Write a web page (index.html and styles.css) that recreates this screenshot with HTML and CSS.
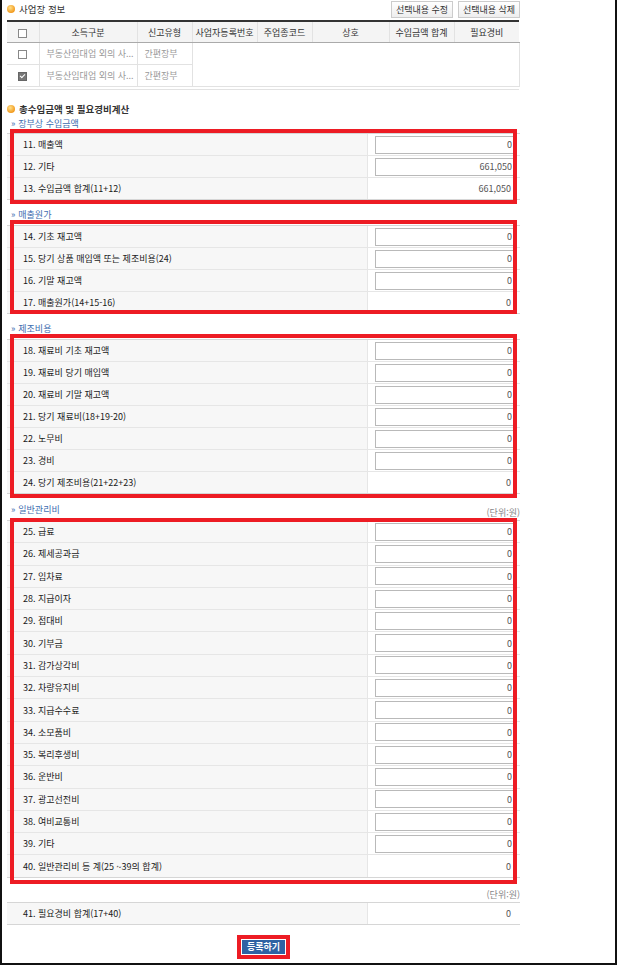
FILE: index.html
```html
<!DOCTYPE html>
<html lang="ko">
<head>
    <meta charset="UTF-8">
    <title>총수입금액 및 필요경비계산</title>
    <link rel="stylesheet" href="styles.css">
</head>
<body>
<div class="page">

    <div class="top-bar">
        <h3 class="sec-title"><span class="dot"></span>사업장 정보</h3>
        <div class="top-btns">
            <button class="btn">선택내용 수정</button>
            <button class="btn">선택내용 삭제</button>
        </div>
    </div>

    <table class="biz-table">
        <colgroup>
            <col style="width:32px"><col style="width:98px"><col style="width:55px"><col style="width:65px">
            <col style="width:55px"><col style="width:77px"><col style="width:65px"><col style="width:65px">
        </colgroup>
        <thead>
            <tr>
                <th><span class="chk"></span></th>
                <th>소득구분</th>
                <th>신고유형</th>
                <th>사업자등록번호</th>
                <th>주업종코드</th>
                <th>상호</th>
                <th>수입금액 합계</th>
                <th>필요경비</th>
            </tr>
        </thead>
        <tbody>
            <tr class="first">
                <td class="c"><span class="chk"></span></td>
                <td class="txt">부동산임대업 외의 사...</td>
                <td class="txt">간편장부</td>
                <td class="blank" colspan="5" rowspan="2"></td>
            </tr>
            <tr>
                <td class="c"><span class="chk on"></span></td>
                <td class="txt">부동산임대업 외의 사...</td>
                <td class="txt">간편장부</td>
            </tr>
        </tbody>
    </table>
    <div class="biz-foot"></div>

    <h3 class="sec-title calc-title"><span class="dot"></span>총수입금액 및 필요경비계산</h3>

    <div class="sub-title">장부상 수입금액</div>
    <div class="box box-1">
        <div class="row"><div class="label">11. 매출액</div><div class="val"><input type="text" value="0"></div></div>
        <div class="row"><div class="label">12. 기타</div><div class="val"><input type="text" value="661,050"></div></div>
        <div class="row"><div class="label">13. 수입금액 합계(11+12)</div><div class="val sum">661,050</div></div>
    </div>

    <div class="sub-title">매출원가</div>
    <div class="box box-2">
        <div class="row"><div class="label">14. 기초 재고액</div><div class="val"><input type="text" value="0"></div></div>
        <div class="row"><div class="label">15. 당기 상품 매입액 또는 제조비용(24)</div><div class="val"><input type="text" value="0"></div></div>
        <div class="row"><div class="label">16. 기말 재고액</div><div class="val"><input type="text" value="0"></div></div>
        <div class="row"><div class="label">17. 매출원가(14+15-16)</div><div class="val sum">0</div></div>
    </div>

    <div class="sub-title">제조비용</div>
    <div class="box box-3">
        <div class="row"><div class="label">18. 재료비 기초 재고액</div><div class="val"><input type="text" value="0"></div></div>
        <div class="row"><div class="label">19. 재료비 당기 매입액</div><div class="val"><input type="text" value="0"></div></div>
        <div class="row"><div class="label">20. 재료비 기말 재고액</div><div class="val"><input type="text" value="0"></div></div>
        <div class="row"><div class="label">21. 당기 재료비(18+19-20)</div><div class="val"><input type="text" value="0"></div></div>
        <div class="row"><div class="label">22. 노무비</div><div class="val"><input type="text" value="0"></div></div>
        <div class="row"><div class="label">23. 경비</div><div class="val"><input type="text" value="0"></div></div>
        <div class="row"><div class="label">24. 당기 제조비용(21+22+23)</div><div class="val sum">0</div></div>
    </div>

    <div class="sub-title with-unit">일반관리비<span class="unit">(단위:원)</span></div>
    <div class="box box-4">
        <div class="row"><div class="label">25. 급료</div><div class="val"><input type="text" value="0"></div></div>
        <div class="row"><div class="label">26. 제세공과금</div><div class="val"><input type="text" value="0"></div></div>
        <div class="row"><div class="label">27. 임차료</div><div class="val"><input type="text" value="0"></div></div>
        <div class="row"><div class="label">28. 지급이자</div><div class="val"><input type="text" value="0"></div></div>
        <div class="row"><div class="label">29. 접대비</div><div class="val"><input type="text" value="0"></div></div>
        <div class="row"><div class="label">30. 기부금</div><div class="val"><input type="text" value="0"></div></div>
        <div class="row"><div class="label">31. 감가상각비</div><div class="val"><input type="text" value="0"></div></div>
        <div class="row"><div class="label">32. 차량유지비</div><div class="val"><input type="text" value="0"></div></div>
        <div class="row"><div class="label">33. 지급수수료</div><div class="val"><input type="text" value="0"></div></div>
        <div class="row"><div class="label">34. 소모품비</div><div class="val"><input type="text" value="0"></div></div>
        <div class="row"><div class="label">35. 복리후생비</div><div class="val"><input type="text" value="0"></div></div>
        <div class="row"><div class="label">36. 운반비</div><div class="val"><input type="text" value="0"></div></div>
        <div class="row"><div class="label">37. 광고선전비</div><div class="val"><input type="text" value="0"></div></div>
        <div class="row"><div class="label">38. 여비교통비</div><div class="val"><input type="text" value="0"></div></div>
        <div class="row"><div class="label">39. 기타</div><div class="val"><input type="text" value="0"></div></div>
        <div class="row"><div class="label">40. 일반관리비 등 계(25 ~39의 합계)</div><div class="val sum">0</div></div>
    </div>

    <div class="unit-line"><span class="unit">(단위:원)</span></div>
    <div class="box box-5">
        <div class="row"><div class="label">41. 필요경비 합계(17+40)</div><div class="val sum">0</div></div>
    </div>

    <div class="submit-area">
        <button class="btn-submit">등록하기</button>
    </div>

</div>
</body>
</html>
```

FILE: styles.css
```css
body {
    margin: 0;
    font-family: "Noto Sans CJK KR", "Noto Sans", sans-serif;
    font-size: 9px;
    color: #333;
    background-color: #fff;
}
.page {
    width: 617px;
    height: 965px;
    box-sizing: border-box;
    border: 2px solid #111;
    border-top: none;
    padding-left: 5px;
    overflow: hidden;
}

/* section titles */
.top-bar {
    width: 513px;
    height: 20px;
    display: flex;
    justify-content: space-between;
}
.sec-title {
    margin: 0;
    display: flex;
    align-items: center;
    font-size: 9.5px;
    font-weight: normal;
    color: #333;
    height: 17px;
}
.dot {
    display: inline-block;
    width: 8px;
    height: 8px;
    border-radius: 50%;
    margin-right: 4px;
    background: radial-gradient(circle at 40% 35%, #ffe08a, #f29a1e 70%);
}
.calc-title {
    margin-top: 12px;
    height: 14px;
    font-weight: bold;
}
.top-btns {
    display: flex;
    gap: 5px;
    padding-top: 1px;
}
.btn {
    height: 17px;
    width: 62px;
    padding: 0;
    font-family: inherit;
    font-size: 9px;
    color: #333;
    border: 1px solid #ccc;
    background: linear-gradient(#fff, #eee);
}

/* business table */
.biz-table {
    width: 512px;
    border-collapse: collapse;
    table-layout: fixed;
    border-top: 2px solid #333;
}
.biz-table th {
    height: 20px;
    padding: 0;
    font-weight: normal;
    background-color: #f4f4f4;
    border-bottom: 1px solid #aaa;
    border-left: 1px solid #e2e2e2;
    white-space: nowrap;
}
.biz-table th:first-child {
    border-left: none;
}
.biz-table td {
    height: 21px;
    padding: 0;
    border-bottom: 1px solid #e2e2e2;
    border-left: 1px solid #e2e2e2;
}
.biz-table td:first-child {
    border-left: none;
}
.biz-table td.c {
    text-align: center;
}
.biz-table td.txt {
    color: #999;
    padding-left: 7px;
    white-space: nowrap;
    overflow: hidden;
}
.biz-table td.blank {
    border-right: 1px solid #e2e2e2;
}
.biz-foot {
    width: 512px;
    margin-top: 2px;
    border-top: 1px solid #e2e2e2;
}
.chk {
    display: inline-block;
    width: 7px;
    height: 7px;
    border: 1px solid #888;
    background: #fff;
    vertical-align: middle;
    position: relative;
}
.chk.on {
    background: #777;
    border-color: #666;
}
.chk.on::after {
    content: "";
    position: absolute;
    left: 2px;
    top: 0;
    width: 2px;
    height: 4px;
    border: solid #fff;
    border-width: 0 1px 1px 0;
    transform: rotate(45deg);
}

/* sub titles */
.sub-title {
    width: 513px;
    height: 14px;
    line-height: 14px;
    margin-top: 1px;
    margin-bottom: 2px;
    color: #3d6db0;
    padding-left: 4px;
    box-sizing: border-box;
    position: relative;
}
.sub-title::before {
    content: "»";
    margin-right: 3px;
    font-size: 9px;
}
.box + .sub-title {
    margin-top: 8px;
    margin-bottom: 3px;
}
.box + .sub-title.with-unit {
    margin-top: 9px;
}
.with-unit .unit {
    position: absolute;
    right: 0;
    top: 3px;
}
.unit {
    color: #888;
    font-size: 9px;
}
.unit-line {
    width: 513px;
    height: 14px;
    margin-top: 10px;
    text-align: right;
    line-height: 14px;
}

/* data rows */
.box {
    width: 513px;
    border-top: 1px solid #d6d6d6;
    position: relative;
}
.box::after {
    content: "";
    position: absolute;
    left: 3px;
    right: 3px;
    top: -5px;
    bottom: -4px;
    border: 4px solid #ed1c24;
    pointer-events: none;
}
.box-2::after { top: -6px; bottom: 0; }
.box-3::after { top: -6px; bottom: -4px; }
.box-4::after { top: -3px; bottom: -6px; }
.box-5::after { display: none; }
.box-4 .row { height: 22.3px; }

.row {
    display: grid;
    grid-template-columns: 360px 1fr;
    height: 22px;
    box-sizing: border-box;
    border-bottom: 1px solid #e6e6e6;
}
.box .row:last-child {
    border-bottom-color: #d6d6d6;
}
.label {
    background-color: #f7f7f7;
    padding-left: 16px;
    display: flex;
    align-items: center;
    color: #1a1a1a;
}
.val {
    border-left: 1px solid #e6e6e6;
    padding: 0 5px 0 7px;
    display: flex;
    align-items: center;
}
.val input {
    width: 100%;
    height: 18px;
    box-sizing: border-box;
    border: 1px solid #b9b9b9;
    padding: 0 2px;
    text-align: right;
    font-family: inherit;
    font-size: 9px;
    color: #555;
}
.val.sum {
    justify-content: flex-end;
    padding-right: 9px;
    color: #555;
}

/* submit */
.submit-area {
    width: 513px;
    margin-top: 15px;
    text-align: center;
}
.btn-submit {
    font-family: inherit;
    font-size: 9px;
    font-weight: bold;
    color: #fff;
    background-color: #2f62a3;
    border: none;
    height: 14px;
    padding: 0 5px;
    outline: 4px solid #ed1c24;
    outline-offset: 1px;
}
```
